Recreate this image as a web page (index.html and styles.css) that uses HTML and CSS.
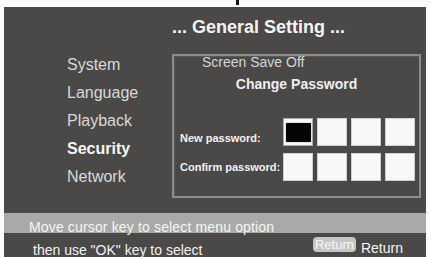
FILE: index.html
```html
<!DOCTYPE html>
<html>
<head>
<meta charset="utf-8">
<link rel="stylesheet" href="styles.css">
</head>
<body>
<div class="top"><span class="mark"></span></div>
<div class="panel">
  <div class="title">... General Setting ...</div>
  <div class="main">
    <ul class="menu">
      <li>System</li>
      <li>Language</li>
      <li>Playback</li>
      <li class="active">Security</li>
      <li>Network</li>
    </ul>
    <div class="box">
      <div class="saver">Screen Save Off</div>
      <div class="heading">Change Password</div>
      <div class="row">
        <div class="label low">New password:</div>
        <div class="cells">
          <div class="cell current"><div class="caret"></div></div>
          <div class="cell"></div>
          <div class="cell"></div>
          <div class="cell"></div>
        </div>
      </div>
      <div class="row second">
        <div class="label">Confirm password:</div>
        <div class="cells">
          <div class="cell"></div>
          <div class="cell"></div>
          <div class="cell"></div>
          <div class="cell"></div>
        </div>
      </div>
    </div>
  </div>
  <div class="hint">Move cursor key to select menu option</div>
  <div class="footer">
    <div class="hint2">then use "OK" key to select</div>
    <div class="ret">
      <span class="btn">Return</span>
      <span class="ret-label">Return</span>
    </div>
  </div>
</div>
</body>
</html>
```
FILE: styles.css
```css
* { box-sizing: border-box; }
html, body { margin: 0; padding: 0; }
body {
  width: 431px;
  height: 257px;
  overflow: hidden;
  background: #fbfbfb;
  font-family: "Liberation Sans", Arial, sans-serif;
}
.top {
  height: 7px;
  display: flex;
}
.mark {
  margin-left: 236px;
  width: 3px;
  height: 5px;
  background: #151515;
}
.panel {
  margin: 0 5px 0 4px;
  height: 250px;
  background: #4a4947;
  display: flex;
  flex-direction: column;
}
.title {
  height: 30px;
  padding: 10px 0 0 168px;
  font-size: 18px;
  line-height: 20px;
  font-weight: bold;
  color: #f4f4f4;
}
.main {
  display: flex;
  padding-top: 17px;
  height: 176px;
}
.menu {
  list-style: none;
  margin: 0;
  padding: 2px 0 0 63px;
  width: 168px;
  display: flex;
  flex-direction: column;
  gap: 10px;
}
.menu li {
  font-size: 16px;
  line-height: 18px;
  color: #d9d9d9;
}
.menu li.active {
  font-weight: bold;
  color: #f6f6f6;
}
.box {
  width: 249px;
  height: 144px;
  border: 2px solid #8e8d8b;
  box-shadow: inset 1px 1px 0 #5a5957;
}
.saver {
  padding-left: 28px;
  font-size: 14px;
  line-height: 12px;
  color: #d6d6d6;
}
.heading {
  margin-top: 8px;
  text-align: center;
  font-size: 14px;
  line-height: 16px;
  font-weight: bold;
  color: #efefef;
}
.row {
  display: flex;
  align-items: center;
  margin-top: 26px;
  padding-left: 6px;
}
.row.second { margin-top: 7px; }
.label {
  width: 103px;
  font-size: 11px;
  line-height: 13px;
  font-weight: bold;
  color: #f2f2f2;
  white-space: nowrap;
}
.label.low { padding-top: 12px; }
.cells {
  display: flex;
  gap: 4px;
}
.cell {
  width: 30px;
  height: 28px;
  background: #f8f8f8;
  border: 1px solid #cfcfcf;
}
.cell.current {
  padding: 4px 1px 3px 2px;
  border-color: #a9a9a9;
}
.caret {
  height: 100%;
  background: #050505;
  border-radius: 1px;
  box-shadow: 0 0 1px #444;
}
.hint {
  margin-top: 15px;
  height: 20px;
  padding: 6px 0 0 25px;
  background: #aaa9a7;
  font-size: 14px;
  line-height: 16px;
  letter-spacing: 0.15px;
  color: #f5f5f5;
}
.footer {
  height: 24px;
  display: flex;
  align-items: flex-start;
  padding: 0 23px 0 29px;
}
.hint2 {
  margin-top: 9px;
  font-size: 14px;
  line-height: 16px;
  color: #f3f3f3;
}
.ret {
  margin-left: auto;
  display: flex;
  align-items: flex-start;
  gap: 5px;
}
.btn {
  margin-top: 4px;
  height: 15px;
  padding: 0 2px;
  background: #c6c6c4;
  border-radius: 4px;
  font-size: 13px;
  line-height: 15px;
  color: #f8f8f8;
}
.ret-label {
  margin-top: 7px;
  font-size: 14px;
  line-height: 16px;
  color: #f3f3f3;
}
```
